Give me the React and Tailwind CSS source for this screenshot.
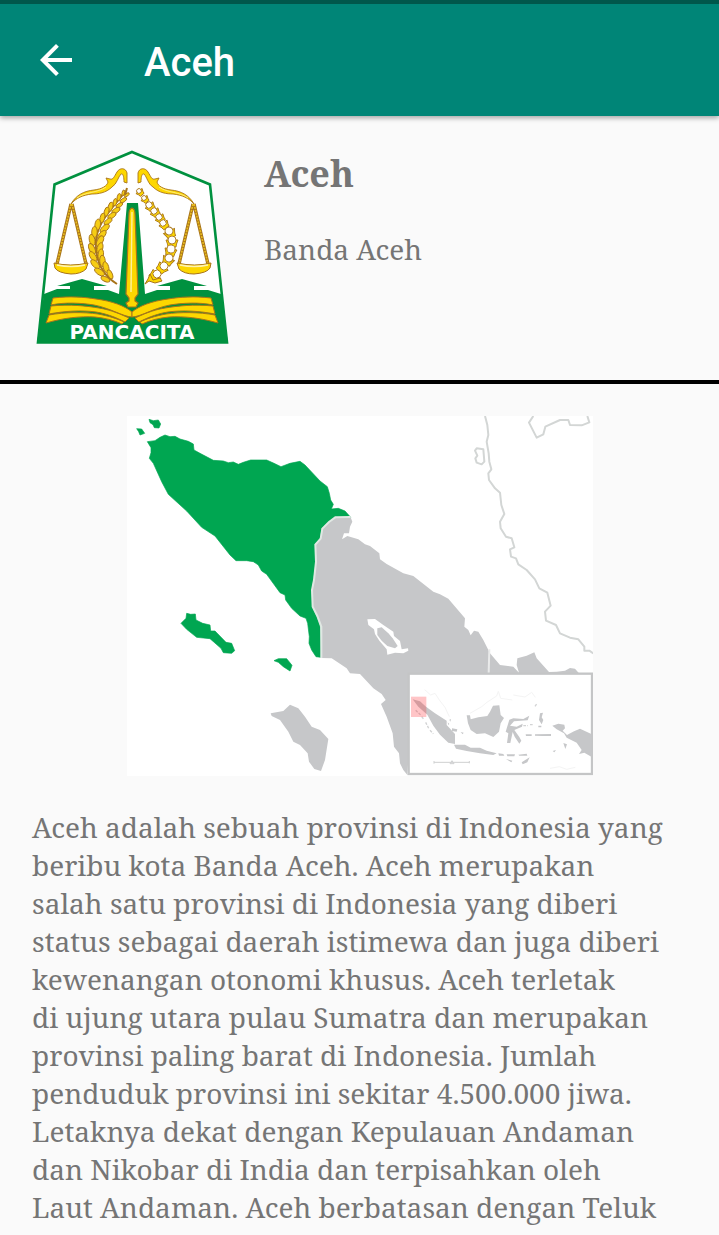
const description = [
  'Aceh adalah sebuah provinsi di Indonesia yang',
  'beribu kota Banda Aceh. Aceh merupakan',
  'salah satu provinsi di Indonesia yang diberi',
  'status sebagai daerah istimewa dan juga diberi',
  'kewenangan otonomi khusus. Aceh terletak',
  'di ujung utara pulau Sumatra dan merupakan',
  'provinsi paling barat di Indonesia. Jumlah',
  'penduduk provinsi ini sekitar 4.500.000 jiwa.',
  'Letaknya dekat dengan Kepulauan Andaman',
  'dan Nikobar di India dan terpisahkan oleh',
  'Laut Andaman. Aceh berbatasan dengan Teluk',
  'Benggala di sebelah utara, Samudra Hindia di',
]

const GOLD = '#fdd700'
const BROWN = '#a8741a'
const GREEN = '#00913f'

// [x, y, size, direction of the stem in degrees]
const grains = [
  [125, 194, 3, -58], [121, 199, 4, -56], [117, 204, 4, -55], [113, 209, 5, -54],
  [109, 214, 5, -54], [105, 220, 5, -58], [101, 227, 6, -62], [98, 234, 6, -68],
  [96, 241, 6, -82], [96, 249, 6, -94], [97, 256, 6, -104], [99, 263, 6, -114],
  [103, 270, 6, -126], [108, 277, 5, -136],
]

// [x, y, radius, direction of the calyx in degrees]
const cotton = [
  [139, 191, 3, 50], [144, 198, 3, 50], [149, 205, 4, 50], [154, 211, 4, 50],
  [159, 217, 4, 50], [163, 223, 4, 55], [169, 231, 5, 65], [172, 240, 5, 90],
  [171, 249, 5, 100], [169, 258, 5, 115], [164, 266, 5, 135], [157, 274, 5, 140],
]

function ScaleArm() {
  return (
    <g>
      <path d="M71 204 L57 264 M72 204 L86 264" fill="none" stroke={BROWN} strokeWidth="3.400" />
      <path d="M71 204 L57 264 M72 204 L86 264" fill="none" stroke="#e9bd1c" strokeWidth="1.600" strokeDasharray="2 1" />
      <path
        d="M71 204 C76 195 84 191 94 190 C102 189 107 186 108 182 L106 178 L110 179 C113 180 114 177 117 172 C120 167 126 168 127 173 L127 183 L124 182 C124 177 123 173 121 174 C118 177 117 184 112 187 C106 193 98 194 92 194 C83 195 76 198 71 204 Z"
        fill={GOLD}
        stroke={BROWN}
        strokeWidth="0.900"
      />
      <path d="M77 198 C84 192 98 193 106 187" fill="none" stroke="#fff0a0" strokeWidth="0.800" />
      <path d="M54 263 Q70 267 88 263 L86 269 Q81 274 71 274 Q58 273 55 268 Z" fill={GOLD} stroke={BROWN} strokeWidth="1" />
      <path d="M57 265 Q71 268 85 265" fill="none" stroke="#fff3b0" strokeWidth="1.600" />
    </g>
  )
}

function BookPages() {
  return (
    <g fill={GOLD} stroke={BROWN} strokeWidth="1">
      <path d="M53 298 C70 296 84 297 96 299 C112 301 125 306 132 312 L132 317 C124 317 110 308 94 305 C82 303 65 302 51 305 Z" />
      <path d="M51 306 C70 304 87 306 99 308 C112 310 122 315 129 318 L125 322 C117 318 108 314 96 312 C81 310 65 311 49 314 Z" />
      <path d="M49 315 C65 312 84 312 98 314 C109 316 118 319 124 322 L122 324 C113 320 105 318 95 317 C80 316 63 318 46 323 Z" />
    </g>
  )
}

function Emblem() {
  return (
    <svg viewBox="32 148 200 200" className="size-[200px] shrink-0" role="img" aria-label="Lambang Aceh">
      <path d="M132 151 L210 184 L228 343 H37 L54 184 Z" fill="#fff" />
      <path
        d="M44 294 L57 289 H70 V286 H57 L82 279 L107 286 H94 V290 H108 L119 294 L127 203 H138 L145 294 L157 290 H170 V286 H157 L182 279 L207 286 H194 V290 H208 L221 294 L228 343 H37 Z"
        fill={GREEN}
      />
      <path d="M132 152 L210 184.500 L227 342.500 H38 L54.500 184.500 Z" fill="none" stroke={GREEN} strokeWidth="2.600" />
      <ScaleArm />
      <g transform="translate(265 0) scale(-1 1)">
        <ScaleArm />
      </g>
      <path d="M126 191 C104 216 94 230 96 248 C97 264 104 276 117 284" fill="none" stroke={BROWN} strokeWidth="2" />
      {grains.map(([x, y, r, angle]) => (
        <g key={y} transform={`translate(${x} ${y}) rotate(${angle})`} fill="#f6cd14" stroke={BROWN} strokeWidth="0.900">
          <ellipse cx={r * 0.3} cy={-r * 0.6} rx={r * 0.95} ry={r * 0.46} transform="rotate(-20)" />
          <ellipse cx={r * 0.3} cy={r * 0.6} rx={r * 0.95} ry={r * 0.46} transform="rotate(20)" />
        </g>
      ))}
      <path d="M125 195 L127 188" stroke={BROWN} strokeWidth="2" />
      {cotton.map(([x, y, r, angle]) => (
        <g key={y} transform={`translate(${x} ${y}) rotate(${angle})`} stroke={BROWN} strokeWidth="0.900">
          <path
            d={`M0 ${-r - 1} Q${r * 0.9} ${-r * 0.8} ${r + 2} ${-r * 0.8} V${r * 0.8} Q${r * 0.9} ${r * 0.8} 0 ${r + 1} Z`}
            fill={GOLD}
          />
          <circle r={r * 0.8} fill="#fff" />
        </g>
      ))}
      <path d="M150 274 L153 280 L160 278 L162 281 L155 283 L149 281 L145 284 L148 279 Z" fill={GOLD} stroke={BROWN} strokeWidth="1" />
      <BookPages />
      <g transform="translate(264 0) scale(-1 1)">
        <BookPages />
      </g>
      <path
        d="M132 208 Q135 209 135 214 L138 294 L135 298 V301 L138 303 L136 307 H128 L126 303 L129 301 V298 L126 294 L129 214 Q129 209 132 208 Z"
        fill={GOLD}
        stroke={BROWN}
        strokeWidth="1.200"
      />
      <path d="M132 212 L131 292" stroke="#fff2a0" strokeWidth="1.400" />
      <text
        x="132"
        y="339"
        textAnchor="middle"
        fill="#fff"
        className="font-['DejaVu_Sans',sans-serif] text-[20px] font-bold"
      >
        PANCACITA
      </text>
    </svg>
  )
}

function ProvinceMap() {
  return (
    <svg viewBox="21 18 1398 1080" className="mx-auto w-[466px] max-w-full bg-white" role="img" aria-label="Peta Aceh">
      <g fill="#00a651" stroke="#00a651" strokeWidth="2" strokeLinejoin="round">
        <path d="M82 95 L105 92 L120 82 L135 75 L150 80 L165 79 L180 87 L205 94 L220 102 L222 120 L240 130 L280 151 L310 153 L325 158 L340 156 L355 163 L370 157 L392 150 H440 L462 160 L483 170 L510 160 L540 154 L555 165 L600 213 L622 230 L628 250 L632 270 L640 283 L634 297 L655 295 L675 303 L692 322 L645 324 L625 335 L605 355 L600 385 L585 403 L587 455 L580 510 L575 540 L577 590 L590 620 L600 650 L602 742 L588 740 L575 720 L567 700 L568 680 L563 640 L558 625 L540 618 L515 595 L497 570 L495 555 L480 548 L440 493 L425 483 L415 465 L400 455 L380 452 H348 L330 435 L285 378 L245 352 L200 303 L145 253 L125 215 L100 160 L88 145 L93 128 L93 113 Z" />
        <path d="M87 28 L100 32 L115 30 L122 42 L117 54 L103 53 L99 44 L90 38 Z" />
        <path d="M50 56 L65 57 L74 70 L60 75 L56 65 Z" />
        <path d="M183 640 L198 625 L200 610 L212 613 L226 612 L228 630 L248 640 L270 645 L272 663 L285 663 L318 697 L335 700 L344 722 L335 730 L310 728 L303 715 L270 686 L230 682 L200 658 Z" />
        <path d="M462 752 L475 746 H500 L516 766 L510 783 L490 770 L475 757 Z" />
      </g>
      <g fill="#c6c7c9">
        <path d="M604 744 V650 L592 618 L579 590 L577 540 L582 510 L589 455 L587 404 L602 386 L607 356 L627 336 L646 322 L692 322 L697 335 L690 350 L687 370 L672 370 L666 388 L682 378 L715 388 L735 403 L750 408 L778 430 L780 448 L800 462 L850 490 L880 498 L940 545 L960 553 L985 566 L1035 625 L1033 650 L1045 660 L1052 676 L1062 662 L1075 665 L1090 690 L1110 730 L1140 765 L1180 770 L1197 788 L1190 765 L1192 745 L1220 737 L1243 727 L1250 745 L1287 786 L1310 785 L1335 782 L1350 774 L1365 776 L1377 790 L1377 800 H880 L862 1095 L850 1080 L840 1060 L837 1030 L822 1010 L818 970 L800 920 L783 882 L797 870 L785 852 L760 835 L720 792 L690 790 L680 775 L635 745 Z" />
        <path d="M452 910 L490 903 L510 884 L535 895 L555 920 L575 950 L600 960 L625 987 L615 1050 L603 1083 L583 1077 L567 1055 L563 1030 L540 1005 L520 995 L505 965 L480 930 L455 918 Z" />
      </g>
      <path d="M604 744 V650 L592 618 L578 590 L576 540 L582 510 L588 455 L586 404 L602 386 L607 356 L627 336 L646 322 L692 321" fill="none" stroke="#e0e8e3" strokeWidth="6" />
      <path d="M1108 718 L1106 790" stroke="#e9eaea" strokeWidth="6" />
      <path d="M742 628 L765 627 L790 645 L820 665 L822 678 L840 693 L845 718 L864 715 L865 722 L850 730 L825 728 L802 734 L800 718 L778 692 L765 672 L762 658 L745 645 Z" fill="#fff" />
      <path d="M772 655 L785 652 L805 670 L818 685 L833 708 L825 715 L802 708 L785 692 L772 675 Z" fill="#c6c7c9" />
      <g fill="none" stroke="#d3d6d5" strokeWidth="6" strokeLinejoin="round">
        <path d="M1095 18 L1102 45 L1105 75 L1100 95 L1106 130 L1108 155 L1114 178 L1105 190 L1107 210 L1125 235 L1140 248 L1144 285 L1153 312 L1140 335 L1142 355 L1158 380 L1175 385 L1183 412 L1170 418 L1173 440 L1188 445 L1195 463 L1220 480 L1245 508 L1258 535 L1282 548 L1292 587 L1275 605 L1278 632 L1308 645 L1320 670 L1350 683 L1375 688 L1393 710 V722 H1408 L1420 730" />
        <path d="M1065 122 L1070 115 L1090 118 L1093 155 L1085 163 L1070 158 L1066 145 L1072 137 Z" />
        <path d="M1240 18 L1227 38 L1250 83 L1270 73 L1276 50 L1320 30 H1345 L1350 45 L1385 46 L1408 37 L1402 18" />
      </g>
      <g transform="translate(690 540)">
        <rect x="176" y="251" width="550" height="301" fill="#fff" stroke="#c4c5c6" strokeWidth="7" />
        <g fill="#c6c7c9">
          <path d="M188 328 L210 334 L228 350 L255 370 L290 392 L290 405 L315 432 V462 L295 458 L270 434 L250 407 L232 374 L205 350 Z" />
          <path d="M350 376 L360 376 L362 388 L385 382 L412 378 L420 365 L429 347 L448 346 L452 375 L462 384 L452 400 L447 425 L430 441 L405 430 L380 432 L362 420 L354 400 Z" />
          <path d="M312 464 L345 464 L362 473 L390 473 L410 482 L440 490 L430 495 L390 490 L350 483 L318 476 Z" />
          <path d="M445 490 L460 492 L463 497 H447 Z M470 493 H495 L493 499 H472 Z M505 494 L530 491 L532 497 H508 Z M468 507 L487 512 L484 517 Z M515 517 L539 502 L532 517 L518 523 Z" />
          <path d="M478 389 L490 385 L520 387 L538 377 L533 391 L492 394 L480 407 L500 410 L518 401 L516 410 L493 420 L508 441 L514 452 L508 461 L494 440 L488 426 L481 459 L471 459 L475 430 L467 425 Z" />
          <path d="M570 370 L579 368 L575 382 L580 390 L575 403 L567 390 Z M555 433 L603 432 V438 H577 L555 437 Z M527 433 H545 V438 H528 Z M565 407 H574 V412 H565 Z" />
          <path d="M607 407 L625 401 L643 404 L645 415 L638 422 L651 435 L672 424 L690 416 L724 432 V500 L703 488 L687 492 L695 480 L680 458 L650 443 L642 430 L620 418 Z" />
          <path d="M640 459 L651 463 L646 477 Z M608 483 L618 480 L613 487 Z M306 415 L322 418 L320 425 L306 423 Z M332 426 L341 428 L338 433 Z M298 389 L303 387 L301 395 Z M293 397 L298 402 L295 405 Z" />
        </g>
        <path d="M197 361 L212 375 M215 380 L221 387 M227 397 L236 415 M240 421 L250 431 M555 349 L560 342 M540 404 H552 M520 407 H534" stroke="#d2d3d4" strokeWidth="4" strokeDasharray="8 4" />
        <g fill="none" stroke="#f4f4f4" strokeWidth="3">
          <path d="M224 299 L242 315 L255 310 L268 330 L285 352 L298 380 M360 370 L395 350 L412 336 L440 318 L445 304 L452 325 L487 330 M490 315 L525 321 L545 307 L556 322 M600 535 L628 530 L650 538 L676 532" />
        </g>
        <path d="M252 517 H358 M252 513 V521 M358 513 V520 M300 521 L306 512 L312 521 Z" fill="none" stroke="#cfd0d1" strokeWidth="3" />
        <rect x="183" y="320" width="46" height="61" fill="#ff2a2f" fillOpacity="0.270" />
      </g>
    </svg>
  )
}

export default function App() {
  return (
    <div className="flex h-screen flex-col bg-[#fafafa] font-['Noto_Serif','Droid_Serif','DejaVu_Serif',serif] text-[#757575]">
      <header className="relative shrink-0 border-t-4 border-[#00574b] bg-[#008577] text-white shadow-[0_2px_5px_rgba(0,0,0,0.35)]">
        <div className="flex h-28 items-center gap-16 px-8">
          <button type="button" aria-label="Kembali" className="size-12">
            <svg viewBox="0 0 24 24" className="size-12" fill="currentColor" aria-hidden="true">
              <path d="M20 11H7.830l5.590-5.590L12 4l-8 8 8 8 1.410-1.410L7.830 13H20v-2z" />
            </svg>
          </button>
          <h1 className="pt-1.5 font-[Roboto,sans-serif] text-[40px] font-medium">Aceh</h1>
        </div>
      </header>
      <main className="min-h-0 flex-1 overflow-y-auto [scrollbar-width:none]">
        <section className="flex gap-8 border-b-4 border-black p-8">
          <Emblem />
          <div className="flex flex-col gap-[30px]">
            <h2 className="text-[36px] leading-[52px] font-bold">Aceh</h2>
            <p className="text-[28px] leading-[38px]">Banda Aceh</p>
          </div>
        </section>
        <section className="flex flex-col gap-8 p-8">
          <ProvinceMap />
          <p className="text-[28px] leading-[38px] whitespace-nowrap">
            {description.map((line) => (
              <span key={line} className="block">
                {line}
              </span>
            ))}
          </p>
        </section>
      </main>
    </div>
  )
}
